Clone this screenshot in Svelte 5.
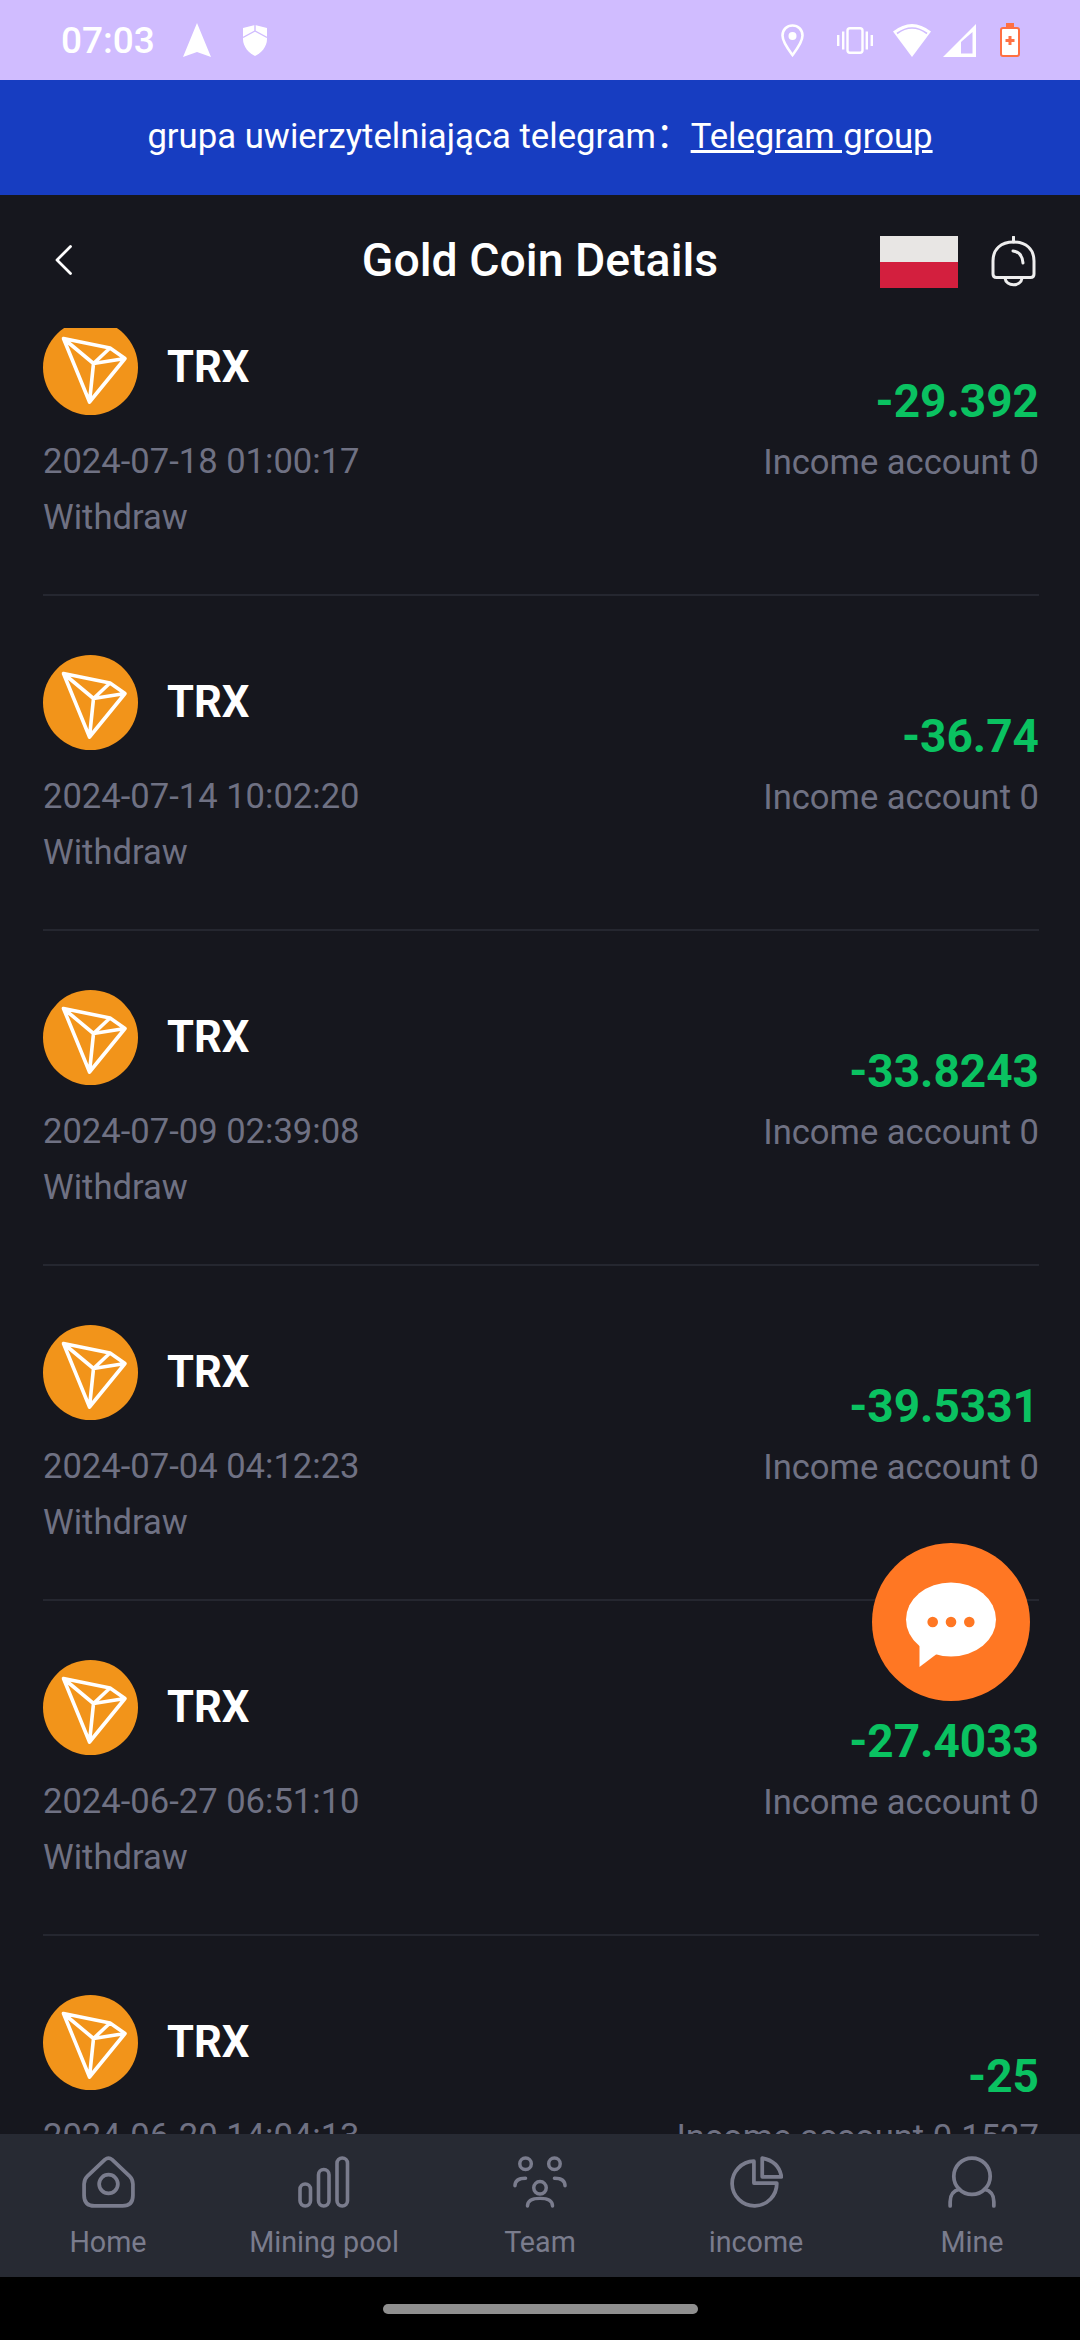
<script>
  const rows = [
    { time: '2024-07-18 01:00:17', amount: '-29.392', account: 'Income account 0' },
    { time: '2024-07-14 10:02:20', amount: '-36.74', account: 'Income account 0' },
    { time: '2024-07-09 02:39:08', amount: '-33.8243', account: 'Income account 0' },
    { time: '2024-07-04 04:12:23', amount: '-39.5331', account: 'Income account 0' },
    { time: '2024-06-27 06:51:10', amount: '-27.4033', account: 'Income account 0' },
    { time: '2024-06-20 14:04:13', amount: '-25', account: 'Income account 0.1527' }
  ];
</script>

<div class="page">
  <div class="status">
    <span class="clock">07:03</span>
    <svg class="s-nav" viewBox="0 0 28 34"><path d="M14 0L28 34L14 29L0 34Z" fill="#fff" /></svg>
    <svg class="s-shield" viewBox="0 0 24 31">
      <path d="M12 0L24 3V14C24 22 18 28 12 31C6 28 0 22 0 14V3Z" fill="#fff" />
      <path d="M0 12.500L12 6L24 12.500M12 0V6" fill="none" stroke="#d0bcff" stroke-width="1.4" />
    </svg>
    <span class="grow"></span>
    <svg class="s-pin" viewBox="0 0 23 33">
      <path d="M11.500 31C7 25 1.500 18 1.500 11.500C1.500 5.500 6 1.500 11.500 1.500C17 1.500 21.500 5.500 21.500 11.500C21.500 18 16 25 11.500 31Z" fill="none" stroke="#fff" stroke-width="2.6" />
      <circle cx="11.500" cy="12" r="4" fill="#fff" />
    </svg>
    <svg class="s-vib" viewBox="0 0 36 27" fill="#fff">
      <rect x="10.500" y="1.200" width="15" height="24.600" rx="2.500" fill="none" stroke="#fff" stroke-width="2.4" />
      <rect x="0" y="8" width="2.400" height="11" /><rect x="5" y="4.500" width="2.400" height="18" />
      <rect x="28.600" y="4.500" width="2.400" height="18" /><rect x="33.600" y="8" width="2.400" height="11" />
    </svg>
    <svg class="s-wifi" viewBox="0 0 38 33">
      <path d="M0 7.500Q19 -7.500 38 7.500L19 33Z" fill="#fff" />
      <path d="M4 9.500Q19 -1.500 34 9.500" fill="none" stroke="#d0bcff" stroke-width="1.6" />
    </svg>
    <svg class="s-signal" viewBox="0 0 33 33">
      <path d="M0 33L33 0V33Z" fill="#fff" />
      <path d="M18 29.500V18L29.500 8V29.500Z" fill="#d0bcff" />
    </svg>
    <svg class="s-battery" viewBox="0 0 20 34">
      <rect x="6" y="0" width="8" height="5" fill="#ff7043" />
      <rect x="1" y="5" width="18" height="28" rx="2" fill="#fff" stroke="#ff7043" stroke-width="2" />
      <path d="M10 13V22M5.500 17.500H14.500" stroke="#ff7043" stroke-width="3" />
    </svg>
  </div>

  <div class="banner">
    <span>grupa uwierzytelniająca telegram：</span>
    <span class="link">Telegram group</span>
  </div>

  <div class="header">
    <svg class="back" viewBox="0 0 17 30"><path d="M15.500 1.500L2 15L15.500 28.500" fill="none" stroke="#fff" stroke-width="2.800" stroke-linecap="round" stroke-linejoin="round" /></svg>
    <div class="title">Gold Coin Details</div>
    <div class="actions">
      <div class="flag"><span class="flag-w"></span><span class="flag-r"></span></div>
      <svg class="bell" viewBox="0 0 45 51" fill="none" stroke="#eee" stroke-width="3" stroke-linecap="round">
        <path d="M22.500 1V6" />
        <path d="M2 38V25C2 13 10 6 22.500 6C35 6 43 13 43 25V38Q43 41.500 39.500 41.500H5.500Q2 41.500 2 38Z" />
        <path d="M14 42C15 51 30 51 31 42" />
        <path d="M22 15Q31 16 32 27" />
      </svg>
    </div>
  </div>

  <div class="list">
    <div class="scroll">
      {#each rows as row}
        <div class="row">
          <div class="left">
            <div class="coin">
              <svg class="tron" viewBox="0 0 95 95">
                <circle cx="47.500" cy="47.500" r="47.500" fill="#f2941a" />
                <path d="M20.500 18.500L67 28L82 38.500L46.500 82ZM20.500 18.500L50.500 43.500L46.500 82M50.500 43.500L67 28M50.500 43.500L82 38.500" fill="none" stroke="#fff" stroke-width="3.600" stroke-linejoin="round" />
              </svg>
              <span class="name">TRX</span>
            </div>
            <div class="info">{row.time}</div>
            <div class="info second">Withdraw</div>
          </div>
          <div class="right">
            <div class="amount">{row.amount}</div>
            <div class="info">{row.account}</div>
          </div>
        </div>
      {/each}
    </div>
  </div>

  <div class="tabs">
    <div class="tab">
      <svg class="ic-home" viewBox="0 0 51 50" fill="none">
        <path d="M22 3.500Q25.500 .500 29 3.500L45.500 19Q49 22.500 49 27V38Q49 48 39 48H12Q2 48 2 38V27Q2 22.500 5.500 19Z" />
        <circle cx="25.500" cy="27" r="9" />
      </svg>
      <span>Home</span>
    </div>
    <div class="tab">
      <svg class="ic-pool" viewBox="0 0 52 52" fill="none">
        <rect x="2" y="28" width="10.500" height="22" rx="5.250" />
        <rect x="20.500" y="13.500" width="10.500" height="36.500" rx="5.250" />
        <rect x="39" y="2" width="10.500" height="48" rx="5.250" />
      </svg>
      <span>Mining pool</span>
    </div>
    <div class="tab">
      <svg class="ic-team" viewBox="0 0 56 54" fill="none">
        <circle cx="13" cy="8" r="6" />
        <circle cx="43" cy="8" r="6" />
        <circle cx="28" cy="33" r="6.500" />
        <path d="M2 31Q2 23 13 23M54 31Q54 23 43 23M15 52Q15 44 28 44Q41 44 41 52" />
      </svg>
      <span>Team</span>
    </div>
    <div class="tab">
      <svg class="ic-income" viewBox="0 0 52 50" fill="none">
        <path d="M24 5A21.500 21.500 0 1 0 46 26H24Z" />
        <path d="M32 2V20H50.500Q48 5 32 2Z" />
      </svg>
      <span>income</span>
    </div>
    <div class="tab">
      <svg class="ic-mine" viewBox="0 0 46 50" fill="none">
        <circle cx="23" cy="19.500" r="17.500" />
        <path d="M2 48V44Q2 34 11 32M44 48V44Q44 34 35 32" />
      </svg>
      <span>Mine</span>
    </div>
  </div>

  <div class="gesture"><span class="handle"></span></div>

  <div class="fab">
    <svg viewBox="0 0 158 158">
      <ellipse cx="79" cy="76.500" rx="45" ry="37" fill="#fff" />
      <path d="M47.500 100V124L66 110Z" fill="#fff" />
      <circle cx="60.700" cy="79" r="5.300" fill="#ff7723" />
      <circle cx="79" cy="79" r="5.300" fill="#ff7723" />
      <circle cx="97.300" cy="79" r="5.300" fill="#ff7723" />
    </svg>
  </div>
</div>

<style>
  :global(body) {
    background: #000;
  }
  .page {
    position: relative;
    width: 1080px;
    height: 2340px;
    display: flex;
    flex-direction: column;
    overflow: hidden;
    background: #16171e;
    font-family: Roboto, "Noto Sans CJK SC", sans-serif;
  }
  .status {
    height: 80px;
    flex: none;
    display: flex;
    align-items: center;
    padding: 0 60px 0 61px;
    background: #d0bcff;
  }
  .clock {
    font-size: 37px;
    font-weight: 500;
    color: #fff;
    margin-right: 28px;
  }
  .grow {
    flex: 1;
  }
  .s-nav { width: 28px; height: 34px; margin-right: 32px; }
  .s-shield { width: 24px; height: 31px; }
  .s-pin { width: 23px; height: 33px; margin-right: 33px; }
  .s-vib { width: 36px; height: 27px; margin-right: 20px; }
  .s-wifi { width: 38px; height: 33px; margin-right: 12px; }
  .s-signal { width: 33px; height: 33px; margin-right: 24px; }
  .s-battery { width: 20px; height: 34px; }
  .banner {
    height: 115px;
    flex: none;
    display: flex;
    align-items: center;
    justify-content: center;
    padding-bottom: 4px;
    box-sizing: border-box;
    background: #173dc1;
    color: #fff;
    font-size: 34.700px;
    line-height: 46px;
  }
  .link {
    text-decoration: underline;
  }
  .header {
    height: 133px;
    flex: none;
    box-sizing: border-box;
    display: grid;
    grid-template-columns: 1fr auto 1fr;
    align-items: center;
    padding: 0 44px 4px 44px;
  }
  .back {
    width: 17px;
    height: 30px;
    margin-left: 11px;
  }
  .title {
    color: #fff;
    font-size: 46.400px;
    font-weight: 500;
    line-height: 54px;
  }
  .actions {
    display: flex;
    align-items: center;
    justify-content: flex-end;
    gap: 33px;
    margin-top: 4px;
  }
  .flag {
    width: 78px;
    height: 52px;
    display: flex;
    flex-direction: column;
  }
  .flag-w { flex: 1; background: #e8e6e4; }
  .flag-r { flex: 1; background: #d31f3e; }
  .bell {
    width: 45px;
    height: 51px;
  }
  .list {
    flex: 1;
    min-height: 0;
    overflow: hidden;
  }
  .scroll {
    margin-top: -67px;
  }
  .row {
    height: 335px;
    box-sizing: border-box;
    margin: 0 41px 0 43px;
    padding-top: 59px;
    display: flex;
    justify-content: space-between;
    border-bottom: 2px solid #252730;
  }
  .coin {
    display: flex;
    align-items: center;
    gap: 29px;
    margin-bottom: 19px;
  }
  .tron {
    width: 95px;
    height: 95px;
    display: block;
  }
  .name {
    color: #fff;
    font-size: 43.500px;
    font-weight: 700;
    line-height: 50px;
  }
  .info {
    color: #6f7183;
    font-size: 34.600px;
    line-height: 55px;
  }
  .second {
    margin-top: 1px;
  }
  .right {
    display: flex;
    flex-direction: column;
    align-items: flex-end;
    padding-top: 51px;
  }
  .amount {
    color: #0ac261;
    font-size: 46px;
    font-weight: 700;
    line-height: 60px;
    margin-bottom: 4px;
  }
  .tabs {
    height: 143px;
    flex: none;
    display: grid;
    grid-template-columns: repeat(5, 1fr);
    background: #272a33;
    position: relative;
  }
  .tab {
    display: flex;
    flex-direction: column;
    align-items: center;
    color: #7a7c8d;
    font-size: 28.700px;
    line-height: 32px;
  }
  .tab svg {
    height: 52px;
    margin-top: 22px;
    margin-bottom: 18px;
    stroke: #7a7c8d;
    stroke-width: 3.6;
    stroke-linecap: round;
    stroke-linejoin: round;
  }
  .ic-home { width: 53px; }
  .ic-pool { width: 52px; }
  .ic-team { width: 56px; }
  .ic-income { width: 54px; }
  .ic-mine { width: 48px; }
  .gesture {
    height: 63px;
    flex: none;
    background: #000;
    display: flex;
    justify-content: center;
    padding-top: 27px;
    box-sizing: border-box;
  }
  .handle {
    width: 315px;
    height: 10px;
    border-radius: 5px;
    background: #8f8f8f;
  }
  .fab {
    position: absolute;
    left: 872px;
    top: 1543px;
    width: 158px;
    height: 158px;
    border-radius: 50%;
    background: #ff7723;
  }
  .fab svg {
    display: block;
    width: 158px;
    height: 158px;
  }
</style>
